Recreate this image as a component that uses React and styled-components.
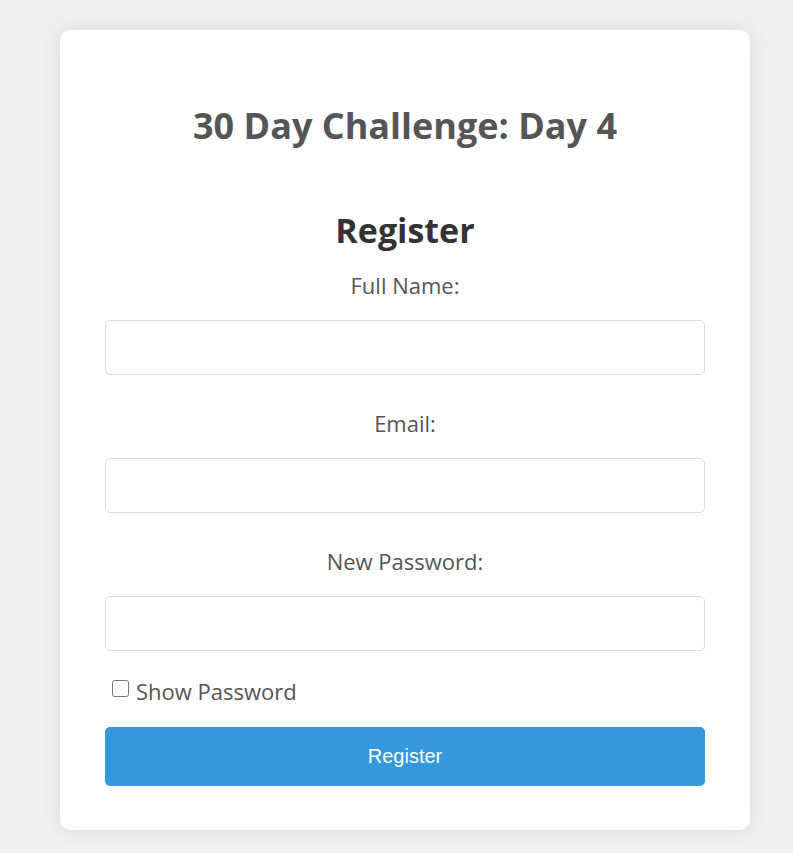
import * as React from 'react';
import styled, { createGlobalStyle } from 'styled-components';

const GlobalStyle = createGlobalStyle`
  * {
    box-sizing: border-box;
  }
  body {
    margin: 0;
    background: #f0f0f0;
    font-family: "Open Sans", "Noto Sans", sans-serif;
  }
`;

const Page = styled.div`
  padding: 30px 0 23px 60px;
`;

const Card = styled.div`
  width: 690px;
  background: #fff;
  border-radius: 10px;
  box-shadow: 0 0 20px rgba(0, 0, 0, 0.1);
  padding: 74px 45px 44px;
  display: flex;
  flex-direction: column;
  text-align: center;
`;

const Title = styled.h1`
  margin: 0;
  font-size: 36px;
  line-height: 44px;
  font-weight: 700;
  color: #555;
`;

const SubTitle = styled.h2`
  margin: 60px 0 0;
  font-size: 34px;
  line-height: 44px;
  font-weight: 700;
  color: #333;
`;

const Form = styled.form`
  display: flex;
  flex-direction: column;
  margin-top: 21px;
`;

const Label = styled.label`
  font-size: 22px;
  line-height: 24px;
  color: #555;
  margin-top: ${props => (props.first ? '0' : '36px')};
`;

const Input = styled.input`
  margin-top: 23px;
  width: 100%;
  height: 55px;
  border: 1px solid #ddd;
  border-radius: 5px;
  padding: 0 12px;
  font-size: 16px;
  font-family: inherit;
  outline: none;
`;

const CheckRow = styled.label`
  display: flex;
  align-items: center;
  gap: 7px;
  margin: 27px 0 0 7px;
  font-size: 22px;
  line-height: 26px;
  color: #555;
  text-align: left;

  & > input {
    margin: 0;
    width: 17px;
    height: 17px;
    position: relative;
    top: -3px;
  }
`;

const Button = styled.button`
  margin-top: 23px;
  height: 59px;
  width: 100%;
  border: none;
  border-radius: 5px;
  background: #3498db;
  color: #fff;
  font-family: "Liberation Sans", Arial, sans-serif;
  font-size: 20px;
  cursor: pointer;
`;

export default class extends React.Component {
  constructor (props) {
    super(props);
    this.state = {
      show: false,
    };
  }

  render () {
    const { show } = this.state;
    return (
      <Page>
        <GlobalStyle />
        <Card>
          <Title>30 Day Challenge: Day 4</Title>
          <SubTitle>Register</SubTitle>
          <Form onSubmit={e => e.preventDefault()}>
            <Label first htmlFor="name">Full Name:</Label>
            <Input id="name" type="text" />
            <Label htmlFor="email">Email:</Label>
            <Input id="email" type="email" />
            <Label htmlFor="password">New Password:</Label>
            <Input id="password" type={show ? 'text' : 'password'} />
            <CheckRow>
              <input type="checkbox" checked={show} onChange={this.toggle} />
              Show Password
            </CheckRow>
            <Button type="submit">Register</Button>
          </Form>
        </Card>
      </Page>
    );
  }

  toggle = () => {
    this.setState({ show: !this.state.show });
  };
}
